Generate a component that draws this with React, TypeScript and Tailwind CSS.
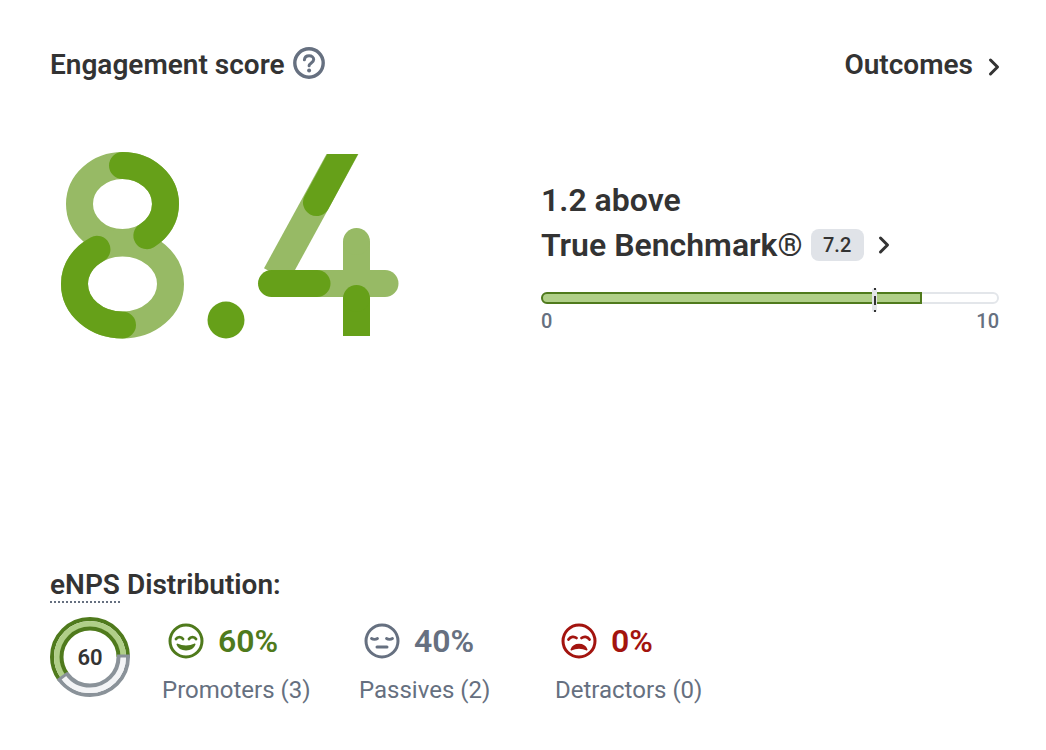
import { ChevronRight } from 'lucide-react'

const darkGreen = '#66a019'
const lightGreen = '#97ba65'

// score graphic, built from thick strokes like the product's own illustration
function ScoreGraphic() {
  return (
    <svg width="360" height="210" viewBox="50 140 360 210" fill="none" role="img" aria-label="8.4" className="shrink-0">
      <defs>
        <clipPath id="diag">
          <rect x="240" y="154" width="140" height="117" />
        </clipPath>
      </defs>
      <ellipse cx="122.5" cy="204" rx="43" ry="38.5" stroke={lightGreen} strokeWidth="27" />
      <ellipse cx="122.5" cy="284" rx="48" ry="41" stroke={lightGreen} strokeWidth="27" />
      <ellipse cx="122.5" cy="204" rx="43" ry="38.5" stroke={darkGreen} strokeWidth="27" strokeLinecap="round" pathLength={100} strokeDasharray="40 60" strokeDashoffset={-75} />
      <ellipse cx="122.5" cy="284" rx="48" ry="41" stroke={darkGreen} strokeWidth="27" strokeLinecap="round" pathLength={100} strokeDasharray="40.5 59.5" strokeDashoffset={-25} />
      <circle cx="226" cy="320" r="18.5" fill={darkGreen} />
      <g clipPath="url(#diag)">
        <line x1="353.1" y1="134.6" x2="276.3" y2="275" stroke={lightGreen} strokeWidth="28" />
        <line x1="353.1" y1="134.6" x2="316.5" y2="202.5" stroke={darkGreen} strokeWidth="27" strokeLinecap="round" />
      </g>
      <line x1="356.5" y1="241.5" x2="356.5" y2="336" stroke={lightGreen} strokeWidth="27" />
      <circle cx="356.5" cy="241.5" r="13.5" fill={lightGreen} />
      <line x1="275" y1="283.5" x2="385" y2="283.5" stroke={lightGreen} strokeWidth="27" strokeLinecap="round" />
      <line x1="271.5" y1="283.5" x2="317" y2="283.5" stroke={darkGreen} strokeWidth="27" strokeLinecap="round" />
      <line x1="356.5" y1="298.5" x2="356.5" y2="336" stroke={darkGreen} strokeWidth="27" />
      <circle cx="356.5" cy="298.5" r="13.5" fill={darkGreen} />
    </svg>
  )
}

function HelpIcon() {
  return (
    <svg width="32" height="32" viewBox="0 0 32 32" fill="none" stroke="#667080" strokeLinecap="round" className="mb-[4px] shrink-0">
      <circle cx="16" cy="16" r="14.2" strokeWidth="3.4" />
      <path d="M11.400 12.800c.3-2.600 2.200-4 4.700-4 2.700 0 4.600 1.600 4.600 3.800 0 3.200-4.600 3.400-4.600 6.200" strokeWidth="3" />
      <circle cx="16.100" cy="23.400" r="2" fill="#667080" stroke="none" />
    </svg>
  )
}

function Smile({ color }: { color: string }) {
  return (
    <svg width="36" height="36" viewBox="0 0 36 36" fill="none" stroke={color} strokeWidth="3" strokeLinecap="round" strokeLinejoin="round" className="shrink-0">
      <circle cx="18" cy="18" r="16" />
      <path d="M8 16c1.500-2.600 5.500-2.600 7 0M21 16c1.500-2.600 5.500-2.600 7 0" strokeWidth="2.800" />
      <path d="M9.500 21.500c2.500 6.500 14.500 6.500 17 0-4.500 2.500-12.500 2.500-17 0z" fill={color} strokeWidth="2" />
    </svg>
  )
}

function Neutral({ color }: { color: string }) {
  return (
    <svg width="36" height="36" viewBox="0 0 36 36" fill="none" stroke={color} strokeWidth="3" strokeLinecap="round" className="shrink-0">
      <circle cx="18" cy="18" r="16" />
      <path d="M7.500 15.500c1.500 1 4.500 1 6 0M22.500 15.500c1.500 1 4.500 1 6 0" strokeWidth="2.800" />
      <path d="M13 24h10" strokeWidth="3" />
    </svg>
  )
}

function Sad({ color }: { color: string }) {
  return (
    <svg width="36" height="36" viewBox="0 0 36 36" fill="none" stroke={color} strokeWidth="3" strokeLinecap="round" strokeLinejoin="round" className="shrink-0">
      <circle cx="18" cy="18" r="16" />
      <path d="M7.500 16.500c2-3 5.500-3.500 8-1.500M28.500 16.500c-2-3-5.500-3.500-8-1.500" strokeWidth="2.800" />
      <path d="M10.500 26.500c2.500-6.500 12.500-6.500 15 0-4-2.500-11-2.500-15 0z" fill={color} strokeWidth="2" />
    </svg>
  )
}

function ScoreRing() {
  return (
    <div className="relative flex h-20 w-20 shrink-0 items-center justify-center">
      <svg width="80" height="80" viewBox="0 0 80 80" fill="none" className="absolute inset-0">
        <circle cx="40" cy="40" r="38" stroke="#8a9299" strokeWidth="4" pathLength={100} strokeDasharray="40 60" />
        <circle cx="40" cy="40" r="33" stroke="#f3f4f6" strokeWidth="6" pathLength={100} strokeDasharray="40 60" />
        <circle cx="40" cy="40" r="28.500" stroke="#8a9299" strokeWidth="4" pathLength={100} strokeDasharray="40 60" />
        <circle cx="40" cy="40" r="38" stroke="#4f7a1c" strokeWidth="4" pathLength={100} strokeDasharray="60 40" strokeDashoffset={-40} />
        <circle cx="40" cy="40" r="33" stroke="#b0cf88" strokeWidth="6" pathLength={100} strokeDasharray="60 40" strokeDashoffset={-40} />
        <circle cx="40" cy="40" r="28.500" stroke="#4f7a1c" strokeWidth="4" pathLength={100} strokeDasharray="60 40" strokeDashoffset={-40} />
        <line x1="67" y1="39" x2="80" y2="39" stroke="#8a9299" strokeWidth="3" />
        <line x1="18.200" y1="55.900" x2="7.600" y2="63.500" stroke="#8a9299" strokeWidth="3" />
      </svg>
      <span className="relative text-[22px] font-semibold text-[#333]">60</span>
    </div>
  )
}

function BenchmarkBar() {
  return (
    <div className="mt-[25px]">
      <div className="relative h-3 w-full overflow-visible rounded-full border-2 border-[#e3e6ea] bg-white">
        <div className="absolute top-[-2px] bottom-[-2px] left-[-2px] w-[381px] rounded-l-full border-2 border-[#4f7a1c] bg-[#b0cf88]" />
        <div className="absolute top-[-6px] left-[329px] flex h-6 w-[5px] flex-col items-center justify-between rounded-full bg-[#e3e6ea]">
          <span className="h-[2px] w-[2px] bg-[#333]" />
          <span className="h-[9px] w-[2px] bg-[#333]" />
          <span className="h-[2px] w-[2px] bg-[#333]" />
        </div>
      </div>
      <div className="mt-[5px] flex justify-between text-[20px] leading-[24px] font-medium text-[#667080]">
        <span>0</span>
        <span>10</span>
      </div>
    </div>
  )
}

type StatProps = {
  icon: React.ReactNode
  value: string
  label: string
  color: string
  width: string
  iconPad: string
}

function Stat({ icon, value, label, color, width, iconPad }: StatProps) {
  return (
    <div className={`flex flex-col ${width}`}>
      <div className={`mt-[6px] flex h-9 items-center gap-[14px] ${iconPad}`}>
        {icon}
        <span className="text-[32px] font-semibold" style={{ color }}>{value}</span>
      </div>
      <span className="mt-[17px] text-[24px] leading-[28px] text-[#667080]">{label}</span>
    </div>
  )
}

export default function App() {
  return (
    <div className="flex h-[750px] w-[1046px] flex-col bg-white pr-[47px] pl-[50px] font-['Roboto',sans-serif] text-[#333]">
      <div className="mt-[45px] flex h-10 items-center justify-between">
        <div className="flex items-center gap-2">
          <span className="text-[28px] font-semibold">Engagement score</span>
          <HelpIcon />
        </div>
        <div className="mr-[-2px] flex items-center gap-[7px]">
          <span className="text-[28px] font-semibold">Outcomes</span>
          <ChevronRight size={28} strokeWidth={2.6} className="mr-[-7px] mt-[3px]" />
        </div>
      </div>

      <div className="mt-[55px] flex">
        <ScoreGraphic />
        <div className="mt-[38px] ml-[131px] flex w-[458px] flex-col">
          <div className="text-[32px] leading-[44px] font-semibold">1.2 above</div>
          <div className="mt-[1px] flex h-11 items-center">
            <span className="text-[32px] font-semibold">True Benchmark®</span>
            <span className="ml-2 w-[53px] rounded-lg bg-[#e0e3e8] py-1 text-center text-[20px] leading-6 font-medium">7.2</span>
            <ChevronRight size={28} strokeWidth={2.6} className="ml-[6px]" />
          </div>
          <BenchmarkBar />
        </div>
      </div>

      <div className="mt-auto mb-[46px]">
        <div className="text-[28px] leading-[34px] font-semibold">
          <span className="border-b-2 border-dotted border-[#667080]">eNPS</span> Distribution:
        </div>
        <div className="mt-[15px] flex">
          <ScoreRing />
          <div className="ml-8 flex">
            <Stat icon={<Smile color="#4f7a1c" />} value="60%" label="Promoters (3)" color="#4f7a1c" width="w-[197px]" iconPad="pl-[6px]" />
            <Stat icon={<Neutral color="#667080" />} value="40%" label="Passives (2)" color="#667080" width="w-[196px]" iconPad="pl-[5px]" />
            <Stat icon={<Sad color="#a3140f" />} value="0%" label="Detractors (0)" color="#a3140f" width="w-[150px]" iconPad="pl-[6px]" />
          </div>
        </div>
      </div>
    </div>
  )
}
